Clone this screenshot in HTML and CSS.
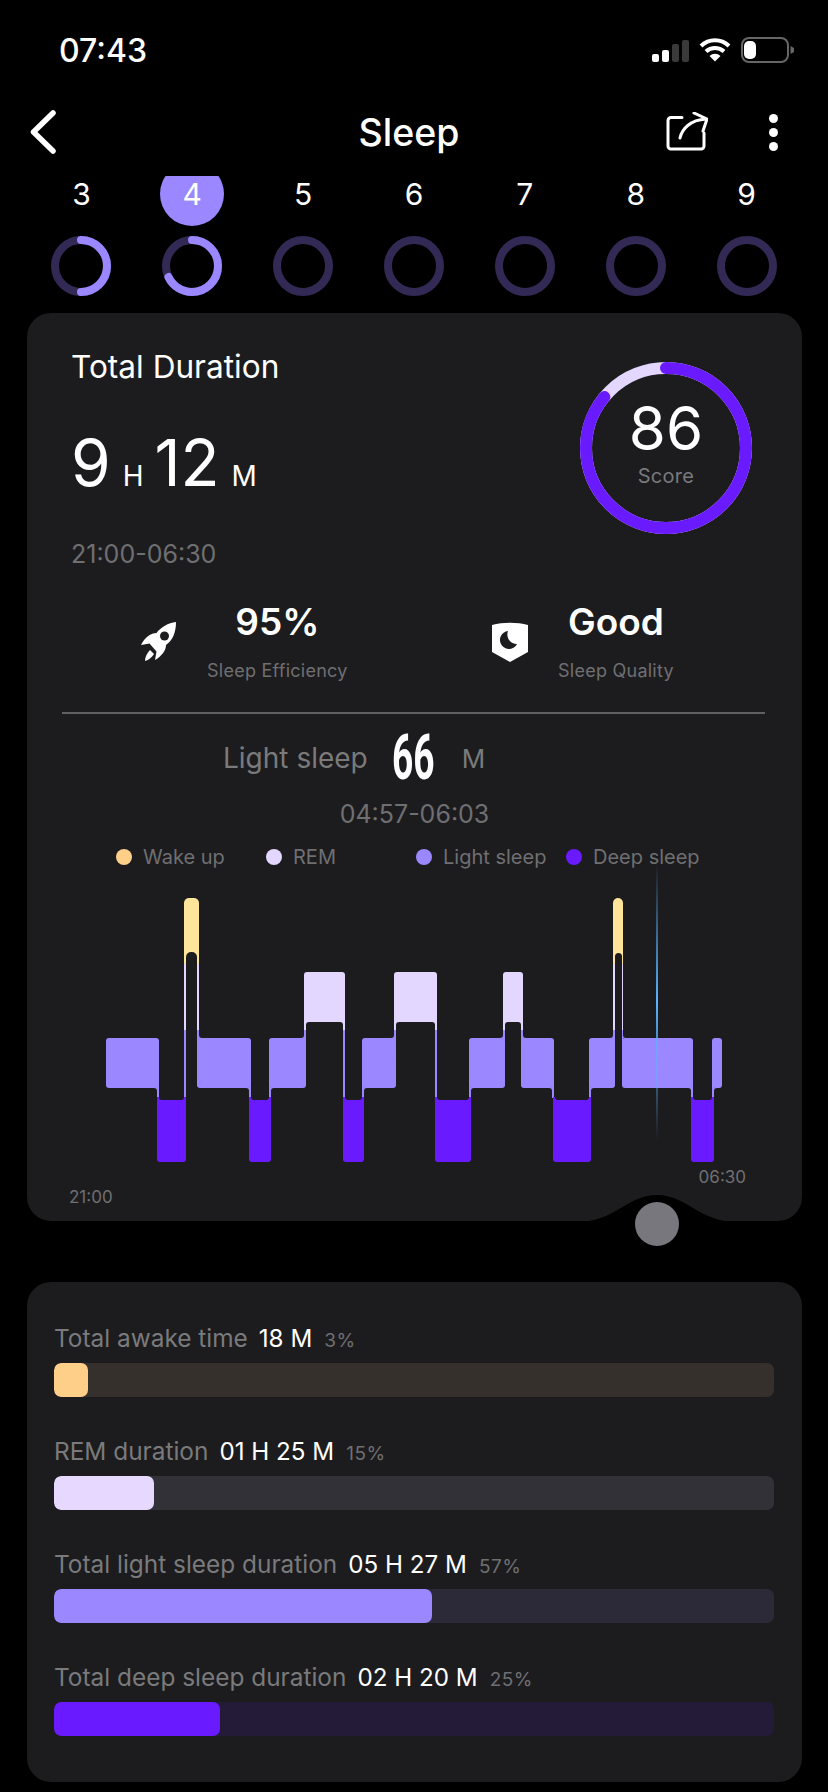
FILE: index.html
```html
<!DOCTYPE html>
<html lang="en">
<head>
    <meta charset="UTF-8">
    <meta name="viewport" content="width=device-width, initial-scale=1.0">
    <title>Sleep</title>
    <link rel="stylesheet" href="styles.css">
</head>
<body>

<div class="status-bar">
    <span class="clock">07:43</span>
    <div class="status-icons">
        <svg width="37" height="23" viewBox="0 0 37 23">
            <rect x="0" y="15" width="7" height="8" rx="2" fill="#fff"/>
            <rect x="10" y="11" width="7" height="12" rx="2" fill="#fff"/>
            <rect x="20" y="5" width="7" height="18" rx="2" fill="#3a3a3a"/>
            <rect x="30" y="1" width="7" height="22" rx="2" fill="#3a3a3a"/>
        </svg>
        <svg width="32" height="24" viewBox="0 0 32 24">
            <path d="M16 23.500l-5.500-5.500a8 8 0 0 1 11 0z" fill="#fff"/>
            <path d="M7 13.500a13 13 0 0 1 18 0M2 8a20 20 0 0 1 28 0" fill="none" stroke="#fff" stroke-width="4"/>
        </svg>
        <svg width="53" height="26" viewBox="0 0 53 26">
            <rect x="1" y="1" width="46" height="24" rx="7" fill="none" stroke="#666" stroke-width="2"/>
            <rect x="3" y="4" width="12" height="18" rx="5" fill="#fff"/>
            <path d="M49.500 9v8l3.500-2v-4z" fill="#666"/>
        </svg>
    </div>
</div>

<div class="nav-bar">
    <svg class="back-icon" width="27" height="46" viewBox="0 0 27 46">
        <path d="M24 4L4.500 23 24 42" fill="none" stroke="#fff" stroke-width="5.500" stroke-linecap="round" stroke-linejoin="round"/>
    </svg>
    <h1 class="nav-title">Sleep</h1>
    <svg class="share-icon" width="42" height="40" viewBox="0 0 42 40">
        <path d="M16 5.500H5a3 3 0 0 0-3 3V34a3 3 0 0 0 3 3h30a3 3 0 0 0 3-3V21" fill="none" stroke="#fff" stroke-width="3" stroke-linecap="round"/>
        <path d="M14 26c2-9 10-18 26-19M28 1l13 6-4 12" fill="none" stroke="#fff" stroke-width="3" stroke-linecap="round" stroke-linejoin="round"/>
    </svg>
    <div class="more-icon"><span></span><span></span><span></span></div>
</div>

<div class="days">
    <div class="day">3</div>
    <div class="day day--active">4</div>
    <div class="day">5</div>
    <div class="day">6</div>
    <div class="day">7</div>
    <div class="day">8</div>
    <div class="day">9</div>
</div>

<div class="rings">
    <svg width="60" height="60" viewBox="0 0 60 60">
        <circle cx="30" cy="30" r="26" class="ring-track"/>
        <circle cx="30" cy="30" r="26" class="ring-value" pathLength="100" stroke-dasharray="50 100" transform="rotate(-90 30 30)"/>
    </svg>
    <svg width="60" height="60" viewBox="0 0 60 60">
        <circle cx="30" cy="30" r="26" class="ring-track"/>
        <circle cx="30" cy="30" r="26" class="ring-value" pathLength="100" stroke-dasharray="68 100" transform="rotate(-90 30 30)"/>
    </svg>
    <svg width="60" height="60" viewBox="0 0 60 60"><circle cx="30" cy="30" r="26" class="ring-track"/></svg>
    <svg width="60" height="60" viewBox="0 0 60 60"><circle cx="30" cy="30" r="26" class="ring-track"/></svg>
    <svg width="60" height="60" viewBox="0 0 60 60"><circle cx="30" cy="30" r="26" class="ring-track"/></svg>
    <svg width="60" height="60" viewBox="0 0 60 60"><circle cx="30" cy="30" r="26" class="ring-track"/></svg>
    <svg width="60" height="60" viewBox="0 0 60 60"><circle cx="30" cy="30" r="26" class="ring-track"/></svg>
</div>

<div class="card card--sleep">
    <div class="summary">
        <div class="summary-left">
            <div class="summary-title">Total Duration</div>
            <div class="duration">
                <span class="duration-num">9</span><span class="duration-unit">H</span><span class="duration-num">12</span><span class="duration-unit">M</span>
            </div>
            <div class="time-range">21:00-06:30</div>
        </div>
        <div class="score">
            <svg width="172" height="172" viewBox="0 0 172 172">
                <circle cx="86" cy="86" r="80" class="score-track"/>
                <circle cx="86" cy="86" r="80" class="score-value" pathLength="100" stroke-dasharray="86 100" transform="rotate(-90 86 86)"/>
            </svg>
            <div class="score-num">86</div>
            <div class="score-label">Score</div>
        </div>
    </div>

    <div class="stats">
        <div class="stat stat--left">
            <svg class="stat-icon" width="36" height="40" viewBox="0 0 36 40">
                <path d="M35 0C27 1 20 5 15.500 11 10 11 4 15 0 23l8.500-1.500 7 8L14 38c7-4 11-10 11-15 7-5 10-13 10-23z" fill="#fff"/>
                <circle cx="23.500" cy="14" r="4.500" fill="#1c1c1e"/>
                <path d="M9 28l4 4c-2 3-5 6-9 7 0-4 2-8 5-11z" fill="#fff"/>
            </svg>
            <div class="stat-text">
                <div class="stat-value">95%</div>
                <div class="stat-label">Sleep Efficiency</div>
            </div>
        </div>
        <div class="stat stat--right">
            <svg class="stat-icon" width="36" height="40" viewBox="0 0 36 40">
                <path d="M0 3c11-3 25-3 36 0v27L18 40 0 30z" fill="#fff"/>
                <path d="M16 9a9 9 0 1 0 9 13 9.500 9.500 0 0 1-9-13z" fill="#1c1c1e"/>
            </svg>
            <div class="stat-text">
                <div class="stat-value">Good</div>
                <div class="stat-label">Sleep Quality</div>
            </div>
        </div>
    </div>

    <div class="divider"></div>

    <div class="stage">
        <span class="stage-name">Light sleep</span>
        <span class="stage-num">66</span>
        <span class="stage-unit">M</span>
    </div>
    <div class="stage-range">04:57-06:03</div>

    <div class="legend">
        <div class="legend-item"><i class="dot dot--wake"></i>Wake up</div>
        <div class="legend-item"><i class="dot dot--rem"></i>REM</div>
        <div class="legend-item"><i class="dot dot--light"></i>Light sleep</div>
        <div class="legend-item"><i class="dot dot--deep"></i>Deep sleep</div>
    </div>

    <!-- chart uses page coordinates in its viewBox -->
    <svg class="chart" width="640" height="270" viewBox="100 895 640 270">
        <defs>
            <linearGradient id="cursor" x1="0" y1="0" x2="0" y2="1">
                <stop offset="0" stop-color="#5ab4ff" stop-opacity="0"/>
                <stop offset="0.5" stop-color="#5ab4ff"/>
                <stop offset="1" stop-color="#5ab4ff" stop-opacity="0"/>
            </linearGradient>
        </defs>
        <g fill="#ffe599">
            <rect x="184" y="898" width="15" height="70" rx="5"/>
            <rect x="613" y="898" width="10" height="70" rx="5"/>
        </g>
        <g fill="#e3d6ff">
            <rect x="184" y="964" width="15" height="70"/>
            <rect x="613" y="964" width="10" height="70"/>
            <path d="M307 972h35a3 3 0 0 1 3 3v59h-41v-59a3 3 0 0 1 3-3z"/>
            <path d="M397 972h37a3 3 0 0 1 3 3v59h-43v-59a3 3 0 0 1 3-3z"/>
            <path d="M506 972h14a3 3 0 0 1 3 3v59h-20v-59a3 3 0 0 1 3-3z"/>
        </g>
        <g fill="#9b87ff">
            <rect x="106" y="1038" width="53" height="50" rx="3"/>
            <rect x="197" y="1038" width="54" height="50" rx="3"/>
            <rect x="269" y="1038" width="37" height="50" rx="3"/>
            <rect x="362" y="1038" width="34" height="50" rx="3"/>
            <rect x="469" y="1038" width="36" height="50" rx="3"/>
            <rect x="521" y="1038" width="33" height="50" rx="3"/>
            <rect x="589" y="1038" width="26" height="50" rx="3"/>
            <rect x="622" y="1038" width="71" height="50" rx="3"/>
            <rect x="712" y="1038" width="10" height="50" rx="3"/>
            <!-- thin links between levels -->
            <rect x="184" y="1030" width="2" height="67"/>
            <rect x="197" y="1030" width="2" height="10"/>
            <rect x="304" y="1030" width="2" height="10"/>
            <rect x="343" y="1030" width="2" height="67"/>
            <rect x="394" y="1030" width="2" height="10"/>
            <rect x="435" y="1030" width="2" height="67"/>
            <rect x="503" y="1030" width="2" height="10"/>
            <rect x="521" y="1030" width="2" height="10"/>
            <rect x="613" y="1030" width="2" height="10"/>
            <rect x="621" y="1030" width="2" height="10"/>
            <rect x="157" y="1084" width="2" height="14"/>
            <rect x="249" y="1084" width="2" height="14"/>
            <rect x="269" y="1084" width="2" height="14"/>
            <rect x="362" y="1084" width="2" height="14"/>
            <rect x="469" y="1084" width="2" height="14"/>
            <rect x="552" y="1084" width="2" height="14"/>
            <rect x="589" y="1084" width="2" height="14"/>
            <rect x="691" y="1084" width="2" height="14"/>
            <rect x="712" y="1084" width="2" height="14"/>
            <!-- fillets -->
            <path d="M154 1088q3 0 3 3v-3zM246 1088q3 0 3 3v-3zM274 1088q-3 0-3 3v-3zM367 1088q-3 0-3 3v-3zM474 1088q-3 0-3 3v-3zM549 1088q3 0 3 3v-3zM594 1088q-3 0-3 3v-3zM688 1088q3 0 3 3v-3zM717 1088q-3 0-3 3v-3z"/>
            <path d="M202 1038q-3 0-3-3v3zM301 1038q3 0 3-3v3zM391 1038q3 0 3-3v3zM500 1038q3 0 3-3v3zM526 1038q-3 0-3-3v3zM610 1038q3 0 3-3v3zM626 1038q-3 0-3-3v3z"/>
        </g>
        <g fill="#6a1aff">
            <path d="M157 1097h29v62a3 3 0 0 1-3 3h-23a3 3 0 0 1-3-3z"/>
            <path d="M249 1097h22v62a3 3 0 0 1-3 3h-16a3 3 0 0 1-3-3z"/>
            <path d="M343 1097h21v62a3 3 0 0 1-3 3h-15a3 3 0 0 1-3-3z"/>
            <path d="M435 1097h36v62a3 3 0 0 1-3 3h-30a3 3 0 0 1-3-3z"/>
            <path d="M553 1097h38v62a3 3 0 0 1-3 3h-32a3 3 0 0 1-3-3z"/>
            <path d="M691 1097h23v62a3 3 0 0 1-3 3h-17a3 3 0 0 1-3-3z"/>
        </g>
        <!-- cut-outs in card colour -->
        <g fill="#1c1c1e">
            <rect x="186" y="952" width="11" height="215" rx="5"/>
            <rect x="615" y="953" width="7" height="140" rx="3.500"/>
            <rect x="306" y="1022" width="37" height="40" rx="3"/>
            <rect x="396" y="1022" width="39" height="40" rx="3"/>
            <rect x="505" y="1022" width="16" height="80" rx="3"/>
            <rect x="159" y="1085" width="25" height="15" rx="3"/>
            <rect x="251" y="1085" width="18" height="15" rx="3"/>
            <rect x="345" y="1085" width="17" height="15" rx="3"/>
            <rect x="437" y="1085" width="32" height="15" rx="3"/>
            <rect x="555" y="1085" width="34" height="15" rx="3"/>
            <rect x="693" y="1085" width="19" height="15" rx="3"/>
        </g>
        <rect x="656" y="863" width="2" height="277" fill="url(#cursor)"/>
    </svg>

    <div class="chart-times">
        <span class="chart-time chart-time--start">21:00</span>
        <span class="chart-time">06:30</span>
    </div>

    <svg class="notch" width="160" height="28" viewBox="0 0 160 28">
        <path d="M0 28h160c-38 0-50-27-80-27S38 28 0 28z" fill="#000"/>
    </svg>
    <div class="handle"></div>
</div>

<div class="card card--totals">
    <div class="total">
        <div class="total-head"><span class="total-name">Total awake time</span><span class="total-value">18 M</span><span class="total-pct">3%</span></div>
        <div class="track track--wake"><div class="fill fill--wake" style="width: 34px"></div></div>
    </div>
    <div class="total">
        <div class="total-head"><span class="total-name">REM duration</span><span class="total-value">01 H 25 M</span><span class="total-pct">15%</span></div>
        <div class="track track--rem"><div class="fill fill--rem" style="width: 100px"></div></div>
    </div>
    <div class="total">
        <div class="total-head"><span class="total-name">Total light sleep duration</span><span class="total-value">05 H 27 M</span><span class="total-pct">57%</span></div>
        <div class="track track--light"><div class="fill fill--light" style="width: 378px"></div></div>
    </div>
    <div class="total">
        <div class="total-head"><span class="total-name">Total deep sleep duration</span><span class="total-value">02 H 20 M</span><span class="total-pct">25%</span></div>
        <div class="track track--deep"><div class="fill fill--deep" style="width: 166px"></div></div>
    </div>
</div>

</body>
</html>
```

FILE: styles.css
```css
* {
    margin: 0;
    padding: 0;
    box-sizing: border-box;
}

body {
    width: 828px;
    height: 1792px;
    overflow: hidden;
    background: #000;
    color: #fff;
    font-family: Inter, "Noto Sans", sans-serif;
}

/* top bars */

.status-bar {
    display: flex;
    justify-content: space-between;
    align-items: center;
    height: 100px;
    padding: 0 34px 0 59px;
}

.clock {
    font-size: 32px;
    font-weight: 500;
}

.status-icons {
    display: flex;
    align-items: center;
    gap: 10px;
}

.nav-bar {
    position: relative;
    display: flex;
    align-items: center;
    height: 64px;
    padding-left: 29px;
}

.nav-title {
    position: absolute;
    left: 0;
    right: 0;
    text-align: center;
    font-size: 37.5px;
    font-weight: 500;
    margin-right: 10px;
}

.share-icon {
    margin-left: auto;
}

.more-icon {
    display: flex;
    flex-direction: column;
    gap: 5px;
    margin: 0 50px 0 61px;
}

.more-icon span {
    width: 9px;
    height: 9px;
    border-radius: 50%;
    background: #fff;
}

/* day picker */

.days {
    position: relative;
    isolation: isolate;
    display: grid;
    grid-template-columns: repeat(7, 1fr);
    height: 50px;
    margin: 12px 26px 0 26px;
    overflow: hidden;
}

.day {
    height: 64px;
    margin-top: -14px;
    display: flex;
    justify-content: center;
    align-items: center;
    font-size: 30px;
}

.day--active::before {
    content: "";
    position: absolute;
    width: 64px;
    height: 64px;
    border-radius: 50%;
    background: #9b87ff;
    z-index: -1;
}

.rings {
    display: grid;
    grid-template-columns: repeat(7, 1fr);
    justify-items: center;
    margin: 10px 26px 17px 26px;
}

.rings svg {
    display: block;
}

.ring-track,
.ring-value {
    fill: none;
    stroke-width: 8;
}

.ring-track {
    stroke: #322a55;
}

.ring-value {
    stroke: #9b87ff;
    stroke-linecap: round;
}

/* cards */

.card {
    width: 775px;
    margin-left: 27px;
    background: #1c1c1e;
    border-radius: 24px;
}

.card--sleep {
    position: relative;
    height: 908px;
    padding-top: 36px;
}

.summary {
    display: flex;
    justify-content: space-between;
    padding: 0 50px 0 44px;
}

.summary-title {
    font-size: 31.6px;
    line-height: 36px;
}

.duration {
    display: flex;
    align-items: baseline;
    margin-top: 43px;
    line-height: 70px;
}

.duration-num {
    font-size: 64px;
}

.duration-unit {
    font-size: 28px;
    margin: 0 11px 0 12px;
}

.time-range {
    margin-top: 28px;
    font-size: 25px;
    line-height: 30px;
    color: #6f6f72;
}

.score {
    position: relative;
    width: 172px;
    height: 172px;
    margin-top: 13px;
    text-align: center;
}

.score svg {
    position: absolute;
    left: 0;
    top: 0;
}

.score-track,
.score-value {
    fill: none;
    stroke-width: 12;
}

.score-track {
    stroke: #e3d6ff;
}

.score-value {
    stroke: #6a1aff;
    stroke-linecap: round;
}

.score-num {
    padding-top: 30px;
    font-size: 60px;
    line-height: 72px;
}

.score-label {
    font-size: 20px;
    line-height: 24px;
    letter-spacing: 0.3px;
    color: #79797c;
}

.stats {
    display: flex;
    margin-top: 31px;
    height: 112px;
}

.stat {
    display: flex;
    align-items: flex-start;
}

.stat--left {
    width: 420px;
    padding-left: 114px;
}

.stat--right {
    padding-left: 45px;
}

.stat-icon {
    margin-top: 22px;
}

.stat-text {
    margin-left: 30px;
    text-align: center;
}

.stat-value {
    font-size: 37px;
    font-weight: 600;
    line-height: 44px;
}

.stat-label {
    margin-top: 15px;
    font-size: 18px;
    line-height: 24px;
    letter-spacing: 0.25px;
    color: #6f6f72;
}

.divider {
    height: 2px;
    margin: 0 37px 0 35px;
    background: #606062;
}

.stage {
    display: flex;
    align-items: center;
    height: 56px;
    margin-top: 16px;
    padding-left: 196px;
    color: #7a7a7c;
}

.stage-name {
    font-size: 28px;
}

.stage-num {
    display: inline-block;
    width: 42px;
    margin-left: 24px;
    color: #fff;
    font-family: Roboto, sans-serif;
    font-size: 63px;
    font-weight: 700;
    line-height: 56px;
    transform: scaleX(0.59);
    transform-origin: left center;
    white-space: nowrap;
}

.stage-unit {
    margin-left: 28px;
    font-size: 26px;
}

.stage-range {
    margin-top: 13px;
    text-align: center;
    font-size: 25px;
    line-height: 30px;
    color: #6f6f72;
}

.legend {
    display: grid;
    grid-template-columns: repeat(4, 150px);
    margin-top: 15px;
    padding-left: 89px;
}

.legend-item {
    display: flex;
    align-items: center;
    gap: 11px;
    font-size: 20px;
    line-height: 26px;
    color: #6f6f72;
    white-space: nowrap;
}

.dot {
    width: 16px;
    height: 16px;
    border-radius: 50%;
}

.dot--wake { background: #fdcf88; }
.dot--rem { background: #e3d6ff; }
.dot--light { background: #9b87ff; }
.dot--deep { background: #6a1aff; }

.chart {
    display: block;
    margin: 25px 0 0 73px;
    overflow: visible;
}

.chart-times {
    display: flex;
    justify-content: space-between;
    align-items: flex-start;
    margin-top: 1px;
    padding: 0 56px 0 42px;
    font-size: 17px;
    line-height: 22px;
    color: #6f6f72;
}

.chart-time--start {
    margin-top: 20px;
}

.notch {
    position: absolute;
    left: 550px;
    bottom: -1px;
}

.handle {
    position: absolute;
    left: 608px;
    bottom: -25px;
    width: 44px;
    height: 44px;
    border-radius: 50%;
    background: #77777d;
}

.card--totals {
    height: 500px;
    margin-top: 61px;
    padding: 33px 28px 0 27px;
}

.total {
    margin-bottom: 31px;
}

.total-head {
    display: flex;
    align-items: baseline;
    height: 48px;
    line-height: 46px;
}

.total-name {
    font-size: 24.4px;
    color: #7a7a7c;
}

.total-value {
    margin-left: 11px;
    font-size: 24.2px;
}

.total-pct {
    margin-left: 12px;
    font-size: 19px;
    letter-spacing: 0.5px;
    color: #6f6f72;
}

.track {
    height: 34px;
    border-radius: 7px;
    overflow: hidden;
}

.fill {
    height: 100%;
    border-radius: 7px;
}

.track--wake { background: #35302b; }
.track--rem { background: #323138; }
.track--light { background: #2c2a38; }
.track--deep { background: #241b39; }

.fill--wake { background: #fdcf88; }
.fill--rem { background: #e6d8ff; }
.fill--light { background: #9b87ff; }
.fill--deep { background: #6a1aff; }
```
